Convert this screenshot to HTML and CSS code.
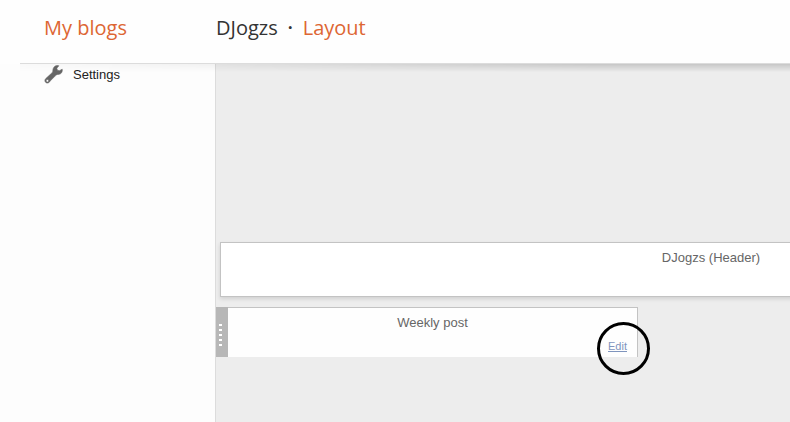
FILE: index.html
```html
<!DOCTYPE html>
<html lang="en">
<head>
	<meta charset="utf-8">
	<title>DJogzs - Layout</title>
	<link rel="stylesheet" href="styles.css">
</head>
<body>
	<header class="header">
		<a class="myblogs" href="#">My blogs</a>
		<h1 class="crumb">
			<span>DJogzs</span>
			<span class="dot">·</span>
			<a href="#">Layout</a>
		</h1>
	</header>

	<div class="page">
		<nav class="sidebar">
			<a class="item" href="#">
				<svg class="wrench" width="19" height="19" viewBox="0 0 19 19">
					<path fill="#666" stroke="#666" stroke-width="0.6" stroke-linejoin="round" fill-rule="evenodd" d="M14.8 0.8 L12.8 3.2 L13.4 5.2 L15.4 5.7 L18.2 4.2 C18.8 7 17 9.4 14.4 9.4 C13.2 9.4 12.6 9.6 11.6 10.6 L6.2 16 C5.2 17.9 3.4 18.5 2 17.7 C0.6 16.7 0.5 14.8 1.8 13.6 L7.8 8 C8.8 7.2 8.8 6.4 8.9 5 C9.1 2 11.8 -0.1 14.8 0.8 Z M3.4 14.5 A1.3 1.3 0 1 0 3.4 17.1 A1.3 1.3 0 1 0 3.4 14.5 Z"/>
				</svg>
				<span>Settings</span>
			</a>
		</nav>

		<main class="canvas">
			<section class="widget title">DJogzs (Header)</section>
			<section class="widget post">
				<div class="handle">
					<i></i><i></i><i></i><i></i><i></i>
				</div>
				<div class="content">
					<span>Weekly post</span>
					<a class="edit" href="#">Edit</a>
				</div>
				<div class="ring"></div>
			</section>
		</main>
	</div>
</body>
</html>
```

FILE: styles.css
```css
*{
	box-sizing: border-box;
}
body{
	margin: 0;
	min-height: 100vh;
	display: flex;
	flex-direction: column;
	overflow: hidden;
	background: #fdfdfd;
	font-family: "Liberation Sans", Arial, sans-serif;
	font-size: 13px;
	color: #222;
}
a{
	text-decoration: none;
}

/* top bar */
.header{
	position: relative;
	display: flex;
	height: 64px;
	padding: 13px 44px 0;
	background: #fefefe;
	font-family: "Open Sans", sans-serif;
	font-size: 20px;
	font-weight: 400;
	line-height: 30px;
	color: #333;
}
.header a{
	color: #dd6633;
}
.header:after{
	content: "";
	position: absolute;
	left: 20px;
	right: 0;
	bottom: 0;
	height: 1px;
	background: #dcdcdc;
}
/* shadow under the bar, fades out to the left */
.header:before{
	content: "";
	position: absolute;
	z-index: 1;
	left: 20px;
	right: 0;
	top: 64px;
	height: 8px;
	background: linear-gradient(rgba(0,0,0,.16), rgba(0,0,0,0));
	-webkit-mask-image: linear-gradient(to right, rgba(0,0,0,.1), rgba(0,0,0,.3) 25%, #000 75%);
	mask-image: linear-gradient(to right, rgba(0,0,0,.1), rgba(0,0,0,.3) 25%, #000 75%);
}
.myblogs{
	width: 172px;
}
.crumb{
	display: flex;
	margin: 0;
	font-size: 20px;
	font-weight: 400;
}
.dot{
	width: 25px;
	text-align: center;
	font-weight: 600;
}

.page{
	flex: 1;
	display: flex;
}
.sidebar{
	flex: none;
	width: 216px;
	padding-left: 44px;
	border-right: 1px solid #dcdcdc;
}
.item{
	display: flex;
	align-items: center;
	gap: 10px;
	height: 20px;
	color: #222;
}
.wrench{
	flex: none;
}

/* layout editor */
.canvas{
	flex: 1;
	min-width: 0;
	overflow: hidden;
	padding-top: 178px;
	background: #ededed;
}
.widget{
	color: #666;
	text-align: center;
	line-height: 16px;
}
.title{
	width: 982px;
	height: 55px;
	margin: 0 4px 10px;
	padding-top: 7px;
	background: #fff;
	border: 1px solid #c3c3c3;
	box-shadow: 0 2px 4px rgba(0,0,0,.12);
}
.post{
	position: relative;
	display: flex;
	width: 422px;
	height: 50px;
}
.handle{
	display: flex;
	flex-direction: column;
	align-items: center;
	gap: 3px;
	width: 12px;
	padding: 17px 3px 0 0;
	background: #b7b7b7;
}
.handle i{
	width: 3px;
	height: 2px;
	background: #fff;
}
.content{
	flex: 1;
	display: flex;
	flex-direction: column;
	justify-content: space-between;
	padding: 7px 10px 4px 10px;
	background: #fefefe;
	border-top: 1px solid #c3c3c3;
	border-right: 1px solid #c3c3c3;
}
.edit{
	align-self: flex-end;
	font-size: 11px;
	line-height: 14px;
	color: #7f94bd;
	text-decoration: underline;
}
.ring{
	position: absolute;
	right: -12px;
	top: 15px;
	width: 53px;
	height: 53px;
	border: 3px solid #000;
	border-radius: 50%;
}
```
